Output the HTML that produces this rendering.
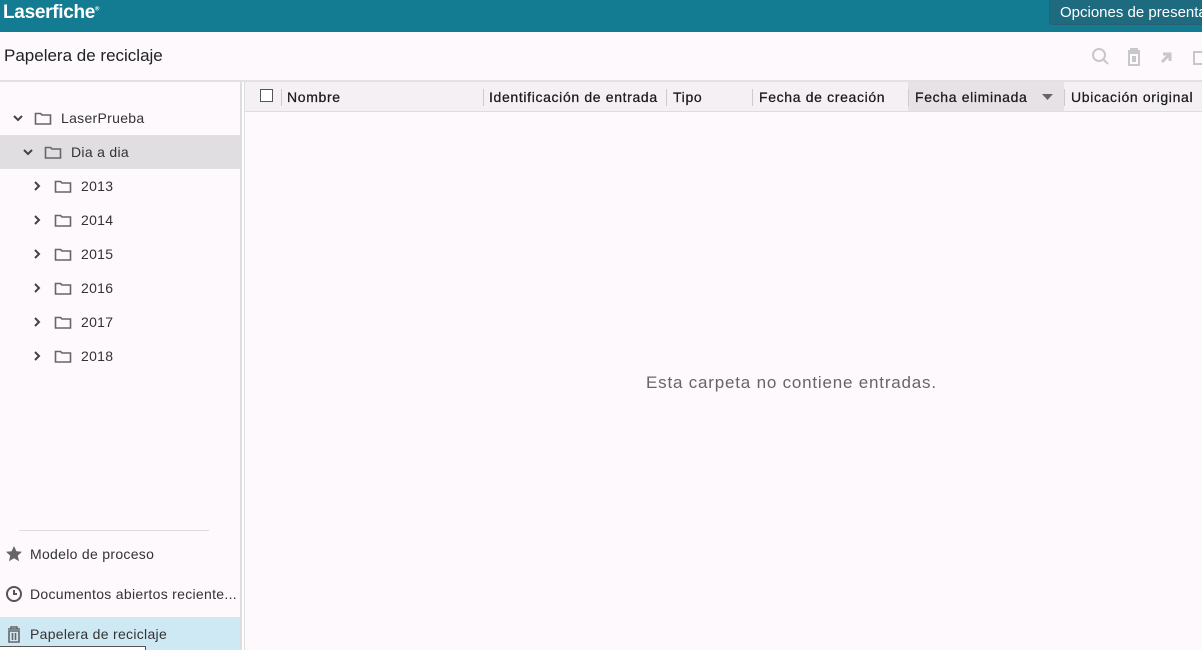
<!DOCTYPE html>
<html><head><meta charset="utf-8"><style>
*{box-sizing:border-box;margin:0;padding:0}
body{width:1202px;height:650px;overflow:hidden;background:#fdf9fd;font-family:"Liberation Sans",sans-serif;color:#333;position:relative}
.top{position:absolute;left:0;top:0;width:1202px;height:32px;background:#137c92}
.logo{position:absolute;left:3px;top:2px;color:#fff;font-weight:bold;font-size:19px;letter-spacing:-0.3px}
.opt{position:absolute;left:1049px;top:-1px;width:170px;height:26px;background:#1e6b80;border:1px solid #2c5f70;border-radius:4px;color:#fff;font-size:15px;padding:4px 0 0 10px;white-space:nowrap}
.tb{position:absolute;top:32px;left:0;width:1202px;height:50px;border-bottom:2px solid #e4e0e4}
.tb h1{position:absolute;left:4px;top:14px;font-size:17px;font-weight:normal;color:#222}
.side{position:absolute;left:0;top:82px;width:240px;height:568px}
.split{position:absolute;left:240px;top:82px;width:5px;height:568px;background:#fff;border-left:2px solid #ddd;border-right:1px solid #ddd}
.row{position:absolute;left:0;width:240px;height:34px;font-size:14px;color:#333;letter-spacing:0.3px}
.row span{position:absolute;top:9px;white-space:nowrap}
.sel{background:#e0dee0}
.hdr{position:absolute;left:245px;top:82px;width:957px;height:30px;background:#f4f0f4;border-bottom:1px solid #e0dce0;font-size:14px;color:#1a1a1a;letter-spacing:0.65px;-webkit-text-stroke:0.25px #1a1a1a}
.hdr div{position:absolute;top:7px;white-space:nowrap}
.sep{position:absolute;top:7px;width:1px;height:17px;background:#ccc}
.empty{position:absolute;left:646px;top:373px;font-size:17px;color:#666;letter-spacing:0.8px;white-space:nowrap}
.cb{position:absolute;left:15px;top:9px;width:13px;height:13px;border:1px solid #555;background:#fff}
</style></head><body>
<div class="top"><div class="logo">Laserfiche<sup style="font-size:6px">®</sup></div><div class="opt">Opciones de presentación</div></div>
<div class="tb"><h1>Papelera de reciclaje</h1>
<svg style="position:absolute;left:1090px;top:14px" width="112" height="22" fill="none" stroke="#c8c8c8" stroke-width="2">
<circle cx="9" cy="9" r="6"/><path d="M13 13l5 5"/>
<path d="M38 5h12M41 5v-2h6v2M39 7h10v12h-10z M43 10v6M45 10v6"/>
<path d="M72 16l7-7M73 8h7v7" stroke-width="3"/>
<rect x="104" y="6" width="10" height="12"/>
</svg></div>
<div class="side">
<div class="row" style="top:19px"><svg style="position:absolute;left:12px;top:12px" width="12" height="10"><path d="M2 3l4 4 4-4" stroke="#444" stroke-width="2" fill="none"/></svg><svg style="position:absolute;left:34px;top:9px" width="18" height="16"><path d="M1.5 3.5h5l1.5 1.5h8.5v9h-15z" stroke="#666" stroke-width="1.6" fill="none"/></svg><span style="left:61px">LaserPrueba</span></div>
<div class="row sel" style="top:53px"><svg style="position:absolute;left:22px;top:12px" width="12" height="10"><path d="M2 3l4 4 4-4" stroke="#444" stroke-width="2" fill="none"/></svg><svg style="position:absolute;left:44px;top:9px" width="18" height="16"><path d="M1.5 3.5h5l1.5 1.5h8.5v9h-15z" stroke="#666" stroke-width="1.6" fill="none"/></svg><span style="left:71px">Dia a dia</span></div>
<div class="row" style="top:87px"><svg style="position:absolute;left:32px;top:11px" width="10" height="12"><path d="M3 2l4 4-4 4" stroke="#444" stroke-width="2" fill="none"/></svg><svg style="position:absolute;left:54px;top:9px" width="18" height="16"><path d="M1.5 3.5h5l1.5 1.5h8.5v9h-15z" stroke="#666" stroke-width="1.6" fill="none"/></svg><span style="left:81px">2013</span></div>
<div class="row" style="top:121px"><svg style="position:absolute;left:32px;top:11px" width="10" height="12"><path d="M3 2l4 4-4 4" stroke="#444" stroke-width="2" fill="none"/></svg><svg style="position:absolute;left:54px;top:9px" width="18" height="16"><path d="M1.5 3.5h5l1.5 1.5h8.5v9h-15z" stroke="#666" stroke-width="1.6" fill="none"/></svg><span style="left:81px">2014</span></div>
<div class="row" style="top:155px"><svg style="position:absolute;left:32px;top:11px" width="10" height="12"><path d="M3 2l4 4-4 4" stroke="#444" stroke-width="2" fill="none"/></svg><svg style="position:absolute;left:54px;top:9px" width="18" height="16"><path d="M1.5 3.5h5l1.5 1.5h8.5v9h-15z" stroke="#666" stroke-width="1.6" fill="none"/></svg><span style="left:81px">2015</span></div>
<div class="row" style="top:189px"><svg style="position:absolute;left:32px;top:11px" width="10" height="12"><path d="M3 2l4 4-4 4" stroke="#444" stroke-width="2" fill="none"/></svg><svg style="position:absolute;left:54px;top:9px" width="18" height="16"><path d="M1.5 3.5h5l1.5 1.5h8.5v9h-15z" stroke="#666" stroke-width="1.6" fill="none"/></svg><span style="left:81px">2016</span></div>
<div class="row" style="top:223px"><svg style="position:absolute;left:32px;top:11px" width="10" height="12"><path d="M3 2l4 4-4 4" stroke="#444" stroke-width="2" fill="none"/></svg><svg style="position:absolute;left:54px;top:9px" width="18" height="16"><path d="M1.5 3.5h5l1.5 1.5h8.5v9h-15z" stroke="#666" stroke-width="1.6" fill="none"/></svg><span style="left:81px">2017</span></div>
<div class="row" style="top:257px"><svg style="position:absolute;left:32px;top:11px" width="10" height="12"><path d="M3 2l4 4-4 4" stroke="#444" stroke-width="2" fill="none"/></svg><svg style="position:absolute;left:54px;top:9px" width="18" height="16"><path d="M1.5 3.5h5l1.5 1.5h8.5v9h-15z" stroke="#666" stroke-width="1.6" fill="none"/></svg><span style="left:81px">2018</span></div>
<div style="position:absolute;left:19px;top:448px;width:190px;height:1px;background:#ddd"></div>
<div class="row" style="top:455px"><svg style="position:absolute;left:5px;top:8px" width="18" height="18"><path d="M9 1l2.4 5.2 5.6.6-4.2 3.8 1.2 5.6L9 13.3 4 16.2l1.2-5.6L1 6.8l5.6-.6z" fill="#666"/></svg><span style="left:30px">Modelo de proceso</span></div>
<div class="row" style="top:495px"><svg style="position:absolute;left:5px;top:8px" width="18" height="18"><circle cx="9" cy="9" r="7" stroke="#555" stroke-width="2" fill="none"/><path d="M9 5v4h3" stroke="#555" stroke-width="2" fill="none"/></svg><span style="left:30px">Documentos abiertos reciente...</span></div>
<div class="row" style="top:535px;height:33px;background:#cfe9f4"><svg style="position:absolute;left:7px;top:9px" width="14" height="17"><path d="M1 3h12M4 3V1h6v2M2 5h10v11H2zM5.5 7v7M8.5 7v7" stroke="#666" stroke-width="1.6" fill="none"/></svg><span style="left:30px">Papelera de reciclaje</span></div>
<div style="position:absolute;left:0;top:564px;width:146px;height:4px;border-top:1px solid #555;border-right:1px solid #555;background:#fff"></div>
</div>
<div class="split"></div>
<div class="hdr">
<div class="cb"></div><div class="sep" style="left:36px"></div>
<div style="left:42px">Nombre</div><div class="sep" style="left:238px"></div>
<div style="left:244px">Identificación de entrada</div><div class="sep" style="left:421px"></div>
<div style="left:428px">Tipo</div><div class="sep" style="left:507px"></div>
<div style="left:514px">Fecha de creación</div>
<div style="left:663px;top:0;width:156px;height:29px;background:#e6e2e6"></div>
<div class="sep" style="left:663px"></div>
<div style="left:670px">Fecha eliminada</div>
<svg style="position:absolute;left:797px;top:12px" width="12" height="7"><path d="M0 0h11l-5.5 6z" fill="#666"/></svg>
<div class="sep" style="left:819px"></div>
<div style="left:826px">Ubicación original</div>
</div>
<div class="empty">Esta carpeta no contiene entradas.</div>
</body></html>
